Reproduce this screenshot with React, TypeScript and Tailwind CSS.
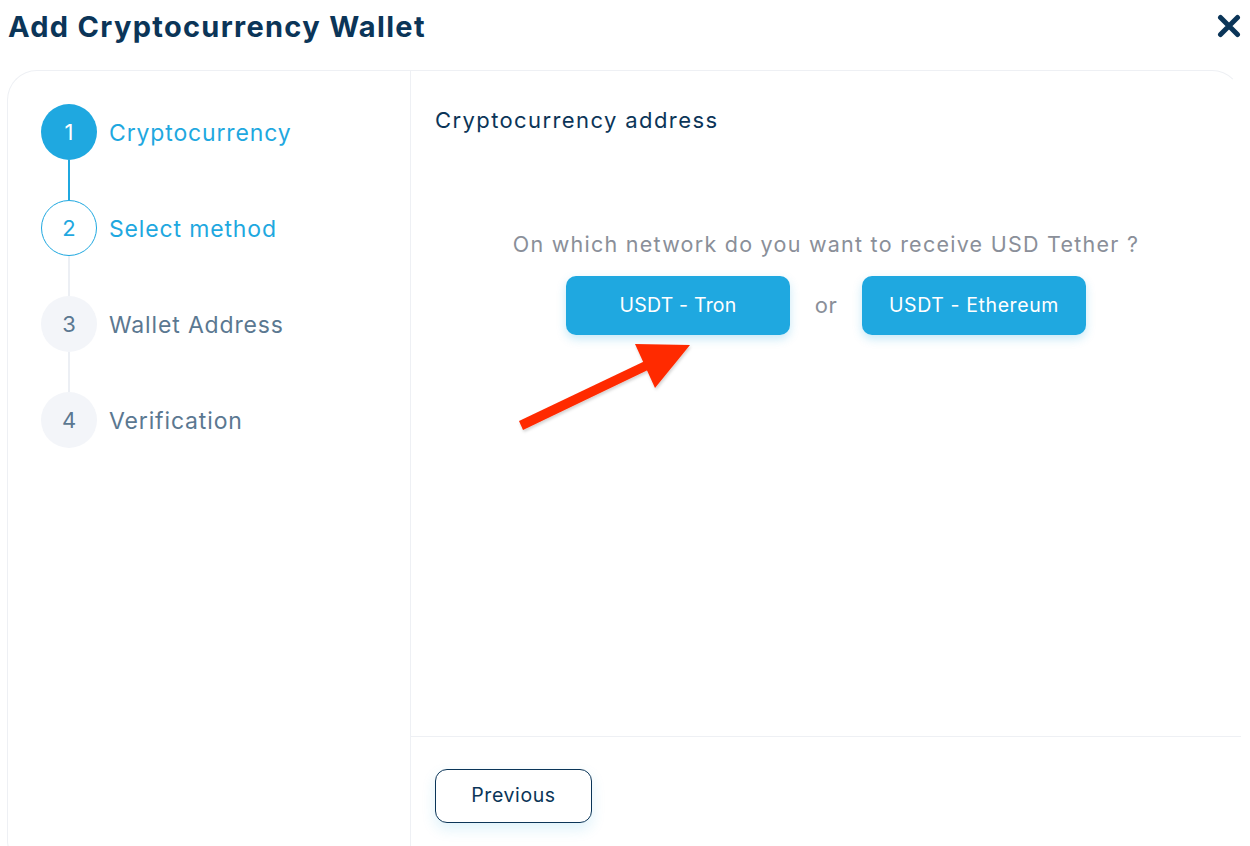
const FONT = { fontFamily: "Inter, 'Noto Sans', sans-serif" };

type StepState = "done" | "current" | "todo";

const steps: { n: number; label: string; state: StepState }[] = [
  { n: 1, label: "Cryptocurrency", state: "done" },
  { n: 2, label: "Select method", state: "current" },
  { n: 3, label: "Wallet Address", state: "todo" },
  { n: 4, label: "Verification", state: "todo" },
];

function Step({ n, label, state, last, lineBlue }: { n: number; label: string; state: StepState; last: boolean; lineBlue: boolean }) {
  const circle =
    state === "done"
      ? "bg-[#1fa8e0] text-white"
      : state === "current"
        ? "bg-white text-[#1fa8e0] border border-[#1fa8e0]"
        : "bg-[#f3f5f9] text-[#5b7891]";
  const text = state === "todo" ? "text-[#5b7891]" : "text-[#1fa8e0]";
  return (
    <div className="flex">
      <div className="flex w-14 flex-col items-center">
        <div className={`flex h-14 w-14 items-center justify-center rounded-full text-[22px] ${circle}`}>{n}</div>
        {!last && <div className={`h-10 w-[2px] ${lineBlue ? "bg-[#1fa8e0]" : "bg-[#eceff4]"}`} />}
      </div>
      <div className={`ml-3 flex h-14 items-center pt-[3px] text-[23px] tracking-[0.85px] ${text}`}>{label}</div>
    </div>
  );
}

function Arrow() {
  return (
    <svg className="pointer-events-none absolute left-[99px] top-[259px]" width="200" height="110" viewBox="510 330 200 110">
      <defs>
        <filter id="sh" x="-10%" y="-10%" width="130%" height="130%">
          <feDropShadow dx="1" dy="2" stdDeviation="1.5" floodColor="#000" floodOpacity="0.18" />
        </filter>
      </defs>
      <g filter="url(#sh)" fill="#ff2a00">
        <polygon points="519,421 523,430 650,369 645,361" />
        <polygon points="635,344 690,345 655,388" />
      </g>
    </svg>
  );
}

export default function App() {
  return (
    <div className="h-[846px] w-[1250px] overflow-hidden bg-white" style={FONT}>
      <div className="flex h-[70px] items-start justify-between pl-2 pr-[9px] pt-[5px]">
        <h1 className="text-[29px] font-bold tracking-[1.3px] text-[#0b3558]">Add Cryptocurrency Wallet</h1>
        <svg className="mt-[9px]" width="24" height="24" viewBox="0 0 24 24">
          <path d="M3.5 3.5 L20.5 20.5 M20.5 3.5 L3.5 20.5" stroke="#0b3558" strokeWidth="5" strokeLinecap="round" />
        </svg>
      </div>

      <div className="ml-[7px] flex h-[800px] w-[1235px] rounded-[30px] border border-[#eef0f4] border-r-transparent">
        <div className="w-[403px] border-r border-[#eef0f4] px-[33px] pt-[33px]">
          {steps.map((s, i) => (
            <Step key={s.n} {...s} last={i === steps.length - 1} lineBlue={i === 0} />
          ))}
        </div>

        <div className="flex flex-1 flex-col">
          <div className="relative h-[665px] px-6 pt-[34px]">
            <div className="text-[22px] leading-[31px] tracking-[1.4px] text-[#0b3558]">Cryptocurrency address</div>
            <div className="mt-[93px] text-center text-[21.5px] leading-[31px] tracking-[1.25px] text-[#8a8f99]">On which network do you want to receive USD Tether ?</div>
            <div className="mt-[16px] flex items-center justify-center gap-[24px]">
              <button className="h-[59px] w-[224px] rounded-[10px] bg-[#1fa8e0] text-[19.5px] tracking-[0.2px] text-white shadow-[0_4px_10px_rgba(31,168,224,0.25)]">USDT - Tron</button>
              <span className="w-[24px] text-center text-[22px] tracking-[0.5px] text-[#8a8f99]">or</span>
              <button className="h-[59px] w-[224px] rounded-[10px] bg-[#1fa8e0] text-[19.5px] tracking-[0.6px] text-white shadow-[0_4px_10px_rgba(31,168,224,0.25)]">USDT - Ethereum</button>
            </div>
            <Arrow />
          </div>
          <div className="border-t border-[#eef0f4] px-6 pt-[32px]">
            <button className="h-[54px] w-[157px] rounded-[12px] border border-[#0b3558] bg-white text-[19.5px] tracking-[0.6px] text-[#0b3558] shadow-[0_6px_14px_rgba(31,168,224,0.15)]">Previous</button>
          </div>
        </div>
      </div>
    </div>
  );
}
